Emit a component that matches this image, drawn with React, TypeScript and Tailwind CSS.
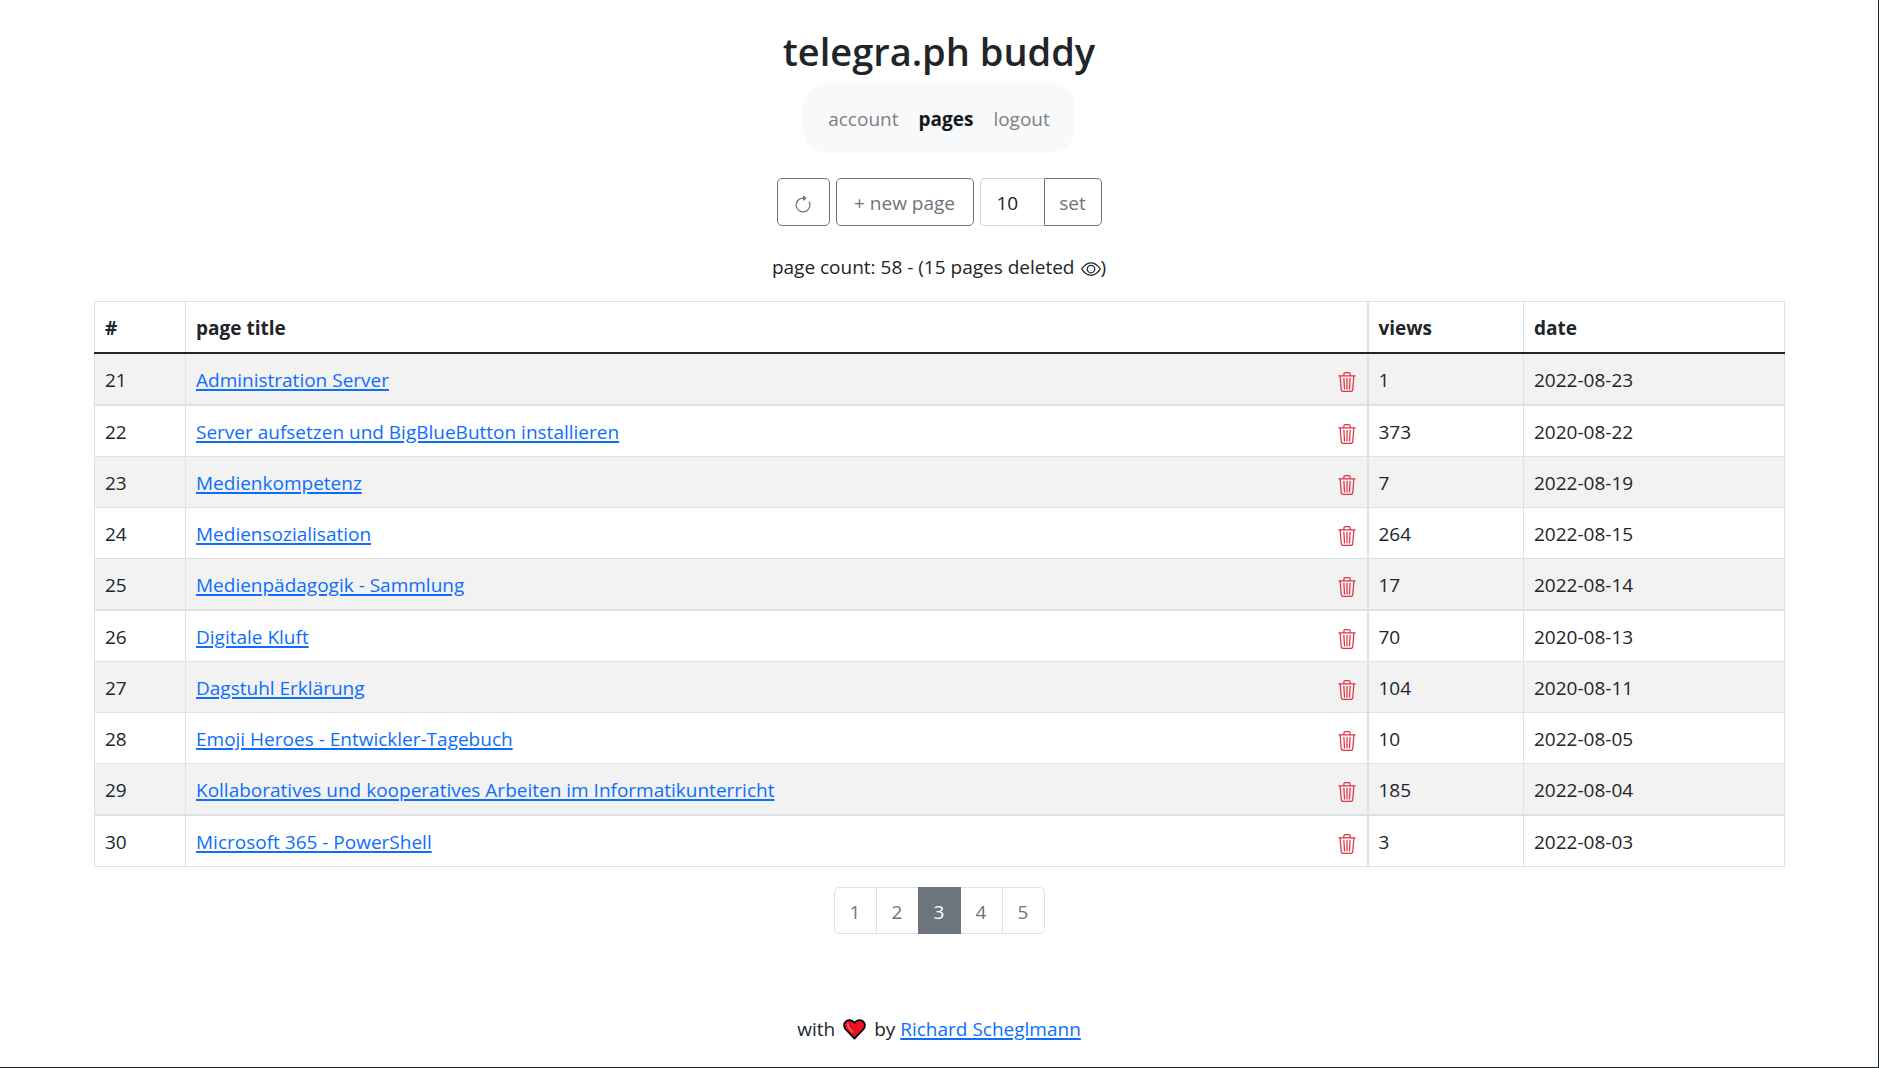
import { BsArrowClockwise, BsEye, BsTrash3 } from "react-icons/bs";

type Page = { id: number; title: string; views: number; date: string; thick?: boolean };

const pages: Page[] = [
  { id: 21, title: "Administration Server", views: 1, date: "2022-08-23", thick: true },
  { id: 22, title: "Server aufsetzen und BigBlueButton installieren", views: 373, date: "2020-08-22" },
  { id: 23, title: "Medienkompetenz", views: 7, date: "2022-08-19" },
  { id: 24, title: "Mediensozialisation", views: 264, date: "2022-08-15" },
  { id: 25, title: "Medienpädagogik - Sammlung", views: 17, date: "2022-08-14", thick: true },
  { id: 26, title: "Digitale Kluft", views: 70, date: "2020-08-13" },
  { id: 27, title: "Dagstuhl Erklärung", views: 104, date: "2020-08-11" },
  { id: 28, title: "Emoji Heroes - Entwickler-Tagebuch", views: 10, date: "2022-08-05" },
  { id: 29, title: "Kollaboratives und kooperatives Arbeiten im Informatikunterricht", views: 185, date: "2022-08-04", thick: true },
  { id: 30, title: "Microsoft 365 - PowerShell", views: 3, date: "2022-08-03" },
];

const link = "text-[#0d6efd] underline decoration-2 underline-offset-2";
const cell = "border border-[#dee2e6] px-[10px] pt-[11px] pb-[9px]";
const views = "border border-l-2 border-[#dee2e6] px-[10px] pt-[11px] pb-[9px]";

function Heart() {
  return (
    <svg viewBox="0 0 24 22" className="mx-2 h-[21px] w-[23px]" role="img" aria-label="love">
      <path
        d="M12 20.5 L2.8 11 C0.6 8.6 0.4 5 2.5 2.9 C5 0.4 9.5 0.7 12 4 C14.5 0.7 19 0.4 21.5 2.9 C23.6 5 23.4 8.6 21.2 11 Z"
        fill="#e81224"
        stroke="#000"
        strokeWidth="1.8"
        strokeLinejoin="round"
      />
      <path d="M5 5 C4.8 8 6.5 10.5 10 13.5" fill="none" stroke="#f4694f" strokeWidth="1.8" strokeLinecap="round" />
    </svg>
  );
}

export default function App() {
  return (
    <div className="flex min-h-screen flex-col items-center border-r border-b border-[#212529] bg-white font-['Open_Sans','Noto_Sans',sans-serif] text-[19px] leading-[30px] text-[#212529]">
      <h1 className="mt-[27px] text-[38px] leading-[48px] font-semibold">telegra.ph buddy</h1>

      <nav className="mt-2 flex h-[70px] items-center gap-5 rounded-[25px] bg-[#f8f9fa] px-[25px] pt-[2px]">
        <a href="#account" className="text-[#7f8081]">account</a>
        <a href="#pages" aria-current="page" className="font-bold text-[#151617]">pages</a>
        <a href="#logout" className="text-[#7f8081]">logout</a>
      </nav>

      <div className="mt-[25px] flex h-12 gap-[6px] text-[#6c757d]">
        <button type="button" aria-label="reload" className="flex w-[53px] items-center justify-center rounded-[5px] border border-[#6c757d] pt-[6px]">
          <BsArrowClockwise className="size-5" />
        </button>
        <button type="button" className="w-[138px] rounded-[5px] border border-[#6c757d] pt-[2px]">+ new page</button>
        <form className="flex" onSubmit={(e) => e.preventDefault()}>
          <input
            aria-label="pages per view"
            defaultValue="10"
            className="w-16 rounded-l-[5px] border border-r-0 border-[#ced4da] pt-[2px] pl-4 text-[#212529] outline-none"
          />
          <button type="submit" className="w-[58px] rounded-r-[5px] border border-[#6c757d] pt-[2px]">set</button>
        </form>
      </div>

      <p className="mt-[26px] flex items-center">
        page count: 58 - (15 pages deleted
        <BsEye className="mt-[3px] ml-[6px] size-5" />)
      </p>

      <div className="mt-[19px] w-full pr-[93px] pl-[94px]">
        <table className="w-full table-fixed border-collapse text-left">
          <colgroup>
            <col className="w-[91px]" />
            <col />
            <col className="w-[156px]" />
            <col className="w-[261px]" />
          </colgroup>
          <thead>
            <tr className="font-bold">
              <th className={`${cell} border-b-2 border-b-[#212529]`}>#</th>
              <th className={`${cell} border-b-2 border-b-[#212529]`}>page title</th>
              <th className={`${views} border-b-2 border-b-[#212529]`}>views</th>
              <th className={`${cell} border-b-2 border-b-[#212529]`}>date</th>
            </tr>
          </thead>
          <tbody>
            {pages.map((p) => (
              <tr key={p.id} className={`odd:bg-[#f2f2f2] ${p.thick ? "[&>td]:border-b-2" : ""}`}>
                <td className={cell}>{p.id}</td>
                <td className={cell}>
                  <div className="flex items-center justify-between">
                    <a href={`#page-${p.id}`} className={link}>{p.title}</a>
                    <button type="button" aria-label={`delete ${p.title}`} className="pt-[3px] text-[#dc3545]">
                      <BsTrash3 className="size-5" />
                    </button>
                  </div>
                </td>
                <td className={views}>{p.views}</td>
                <td className={cell}>{p.date}</td>
              </tr>
            ))}
          </tbody>
        </table>
      </div>

      <nav aria-label="pagination" className="mt-5 flex h-[47px] text-[#6c757d]">
        {[1, 2, 3, 4, 5].map((n) => (
          <a
            key={n}
            href={`#p${n}`}
            aria-current={n === 3 ? "page" : undefined}
            className={`-ml-px flex w-[43px] items-center justify-center border pt-[2px] first:ml-0 first:rounded-l-[5px] last:rounded-r-[5px] ${
              n === 3 ? "z-10 border-[#6c757d] bg-[#6c757d] text-white" : "border-[#dee2e6]"
            }`}
          >
            {n}
          </a>
        ))}
      </nav>

      <footer className="mt-20 flex items-center">
        with <Heart /> by&nbsp;<a href="#author" className={link}>Richard Scheglmann</a>
      </footer>
    </div>
  );
}
